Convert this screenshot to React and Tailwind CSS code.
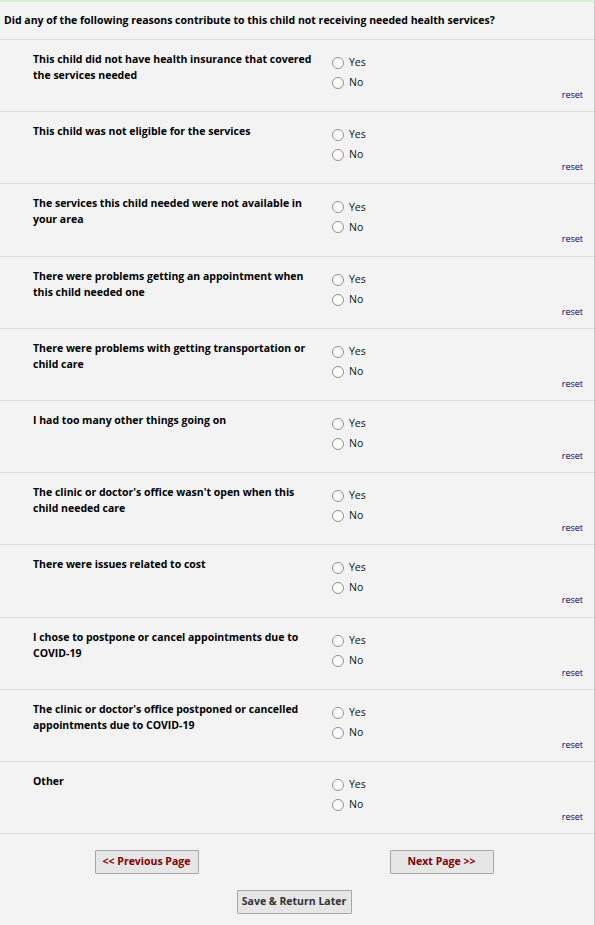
import { useState } from "react";

const reasons = [
  "This child did not have health insurance that covered the services needed",
  "This child was not eligible for the services",
  "The services this child needed were not available in your area",
  "There were problems getting an appointment when this child needed one",
  "There were problems with getting transportation or child care",
  "I had too many other things going on",
  "The clinic or doctor's office wasn't open when this child needed care",
  "There were issues related to cost",
  "I chose to postpone or cancel appointments due to COVID-19",
  "The clinic or doctor's office postponed or cancelled appointments due to COVID-19",
  "Other",
];

const Radio = ({ checked, onClick, label }) => (
  <label
    onClick={onClick}
    className="flex items-center h-[20px] cursor-pointer"
  >
    <span className="w-[12px] h-[12px] rounded-full border border-[#8f8f8f] bg-white flex items-center justify-center">
      {checked && <span className="w-[6px] h-[6px] rounded-full bg-[#333]" />}
    </span>
    <span className="ml-[5px] text-[10.5px] text-[#111]">{label}</span>
  </label>
);

const ReasonRow = ({ text, value, onChange }) => (
  <div className="border-b border-[#dcdcdc] pt-[11px] pb-[10.2px]">
    <div className="flex">
      <div className="pl-[33px] w-[332px] pr-[14px] font-bold text-[10.5px] leading-[16px] text-black">
        {text}
      </div>
      <div className="flex flex-col mt-[2px]">
        <Radio label="Yes" checked={value === "yes"} onClick={() => onChange("yes")} />
        <Radio label="No" checked={value === "no"} onClick={() => onChange("no")} />
      </div>
    </div>
    <div className="-mt-[4px] flex justify-end pr-[11px] leading-[12px]">
      <a
        onClick={() => onChange(null)}
        className="text-[9px] text-[#000066] cursor-pointer"
      >
        reset
      </a>
    </div>
  </div>
);

const App = () => {
  const [answers, setAnswers] = useState({});

  return (
    <div
      className="w-[595px] min-h-[925px] bg-[#f3f3f3] border-t-2 border-[#d6f0d6] border-r border-r-[#c8c8c8]"
      style={{ fontFamily: '"Open Sans", "Noto Sans", sans-serif' }}
    >
      <div className="h-[38px] flex items-center pl-[4px] border-b border-[#dcdcdc] font-bold text-[10.5px] text-black">
        Did any of the following reasons contribute to this child not receiving needed health services?
      </div>

      {reasons.map((r, i) => (
        <ReasonRow
          key={i}
          text={r}
          value={answers[i]}
          onChange={(v) => setAnswers({ ...answers, [i]: v })}
        />
      ))}

      {/* Navigation */}
      <div className="pt-[16px]">
        <div className="grid grid-cols-2">
          <div className="flex justify-center pl-[2px]">
            <button className="w-[104px] h-[24px] bg-[#e6e6e6] border border-[#a8a8a8] rounded-[1px] text-[10.5px] font-bold text-[#800000] -translate-x-[3px]">
              &lt;&lt; Previous Page
            </button>
          </div>
          <div className="flex justify-center">
            <button className="w-[104px] h-[24px] bg-[#e6e6e6] border border-[#a8a8a8] rounded-[1px] text-[10.5px] font-bold text-[#800000] -translate-x-[4px]">
              Next Page &gt;&gt;
            </button>
          </div>
        </div>
        <div className="flex justify-center mt-[16px]">
          <button className="w-[115px] h-[24px] bg-[#e6e6e6] border border-[#a8a8a8] rounded-[1px] text-[10.5px] font-bold text-[#333] -translate-x-[3px]">
            Save &amp; Return Later
          </button>
        </div>
      </div>
    </div>
  );
};

export default App;
